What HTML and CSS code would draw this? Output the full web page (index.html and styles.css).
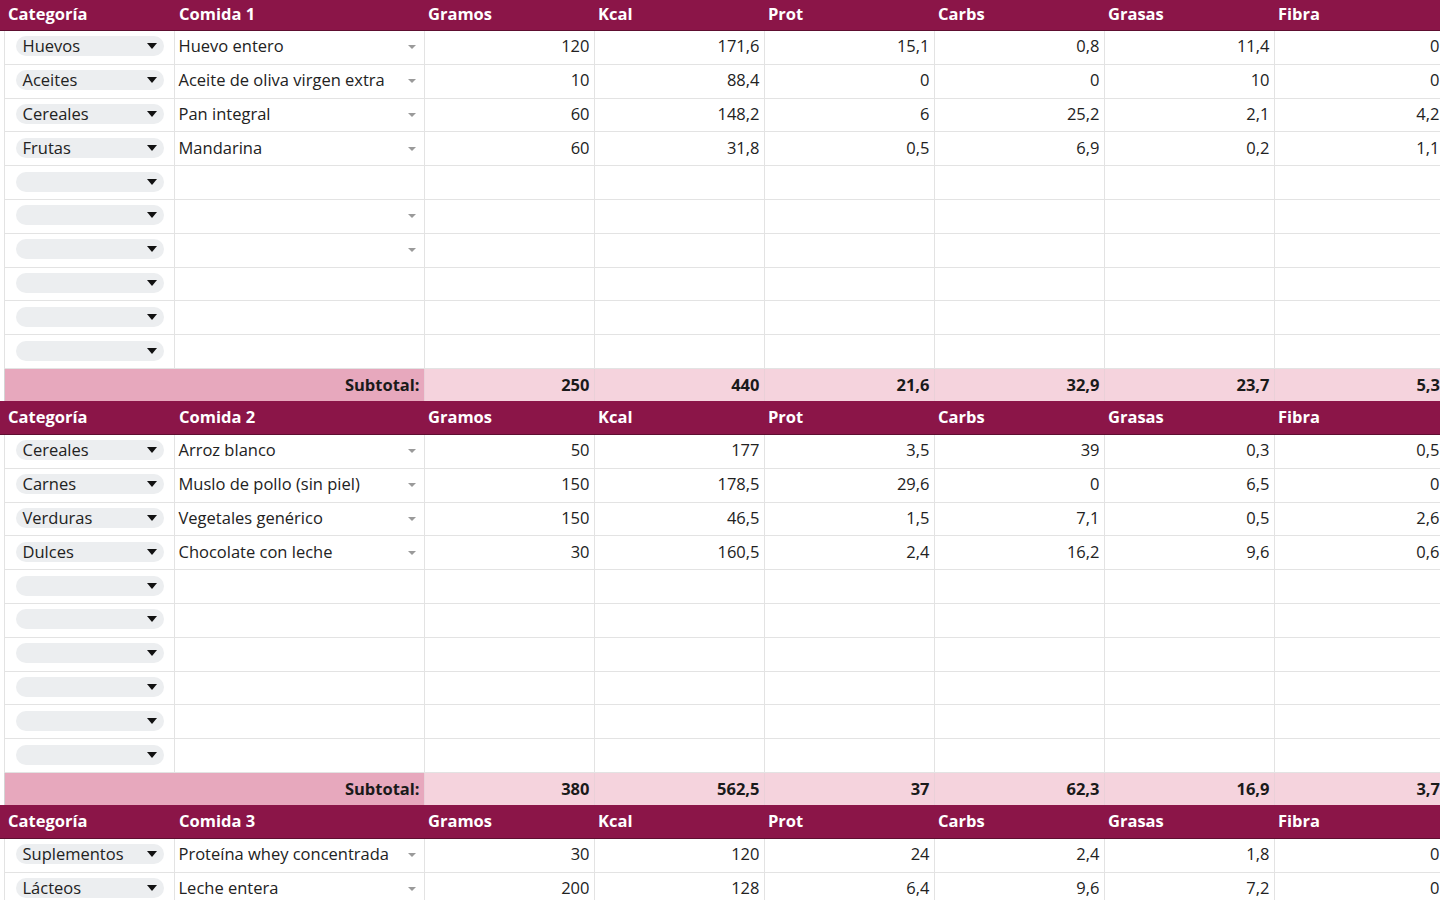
FILE: index.html
```html
<!DOCTYPE html>
<html lang="es">
<head>
<meta charset="utf-8">
<title>Comidas</title>
<link rel="stylesheet" href="styles.css">
</head>
<body>
<div class="sheet">
<table class="grid">
<colgroup>
<col class="c-pad"><col class="c-cat"><col class="c-food"><col class="c-num"><col class="c-num"><col class="c-num"><col class="c-num"><col class="c-num"><col class="c-num">
</colgroup>
<tbody>
<!-- Comida 1 -->
<tr class="head"><td></td><td>Categoría</td><td>Comida 1</td><td>Gramos</td><td>Kcal</td><td>Prot</td><td>Carbs</td><td>Grasas</td><td>Fibra</td></tr>
<tr class="row"><td class="pad"></td><td class="cat"><span class="pill">Huevos<i class="tri"></i></span></td><td class="food">Huevo entero<i class="arr"></i></td><td>120</td><td>171,6</td><td>15,1</td><td>0,8</td><td>11,4</td><td>0</td></tr>
<tr class="row"><td class="pad"></td><td class="cat"><span class="pill">Aceites<i class="tri"></i></span></td><td class="food">Aceite de oliva virgen extra<i class="arr"></i></td><td>10</td><td>88,4</td><td>0</td><td>0</td><td>10</td><td>0</td></tr>
<tr class="row"><td class="pad"></td><td class="cat"><span class="pill">Cereales<i class="tri"></i></span></td><td class="food">Pan integral<i class="arr"></i></td><td>60</td><td>148,2</td><td>6</td><td>25,2</td><td>2,1</td><td>4,2</td></tr>
<tr class="row"><td class="pad"></td><td class="cat"><span class="pill">Frutas<i class="tri"></i></span></td><td class="food">Mandarina<i class="arr"></i></td><td>60</td><td>31,8</td><td>0,5</td><td>6,9</td><td>0,2</td><td>1,1</td></tr>
<tr class="row"><td class="pad"></td><td class="cat"><span class="pill"><i class="tri"></i></span></td><td class="food"></td><td></td><td></td><td></td><td></td><td></td><td></td></tr>
<tr class="row"><td class="pad"></td><td class="cat"><span class="pill"><i class="tri"></i></span></td><td class="food"><i class="arr"></i></td><td></td><td></td><td></td><td></td><td></td><td></td></tr>
<tr class="row"><td class="pad"></td><td class="cat"><span class="pill"><i class="tri"></i></span></td><td class="food"><i class="arr"></i></td><td></td><td></td><td></td><td></td><td></td><td></td></tr>
<tr class="row"><td class="pad"></td><td class="cat"><span class="pill"><i class="tri"></i></span></td><td class="food"></td><td></td><td></td><td></td><td></td><td></td><td></td></tr>
<tr class="row"><td class="pad"></td><td class="cat"><span class="pill"><i class="tri"></i></span></td><td class="food"></td><td></td><td></td><td></td><td></td><td></td><td></td></tr>
<tr class="row"><td class="pad"></td><td class="cat"><span class="pill"><i class="tri"></i></span></td><td class="food"></td><td></td><td></td><td></td><td></td><td></td><td></td></tr>
<tr class="sub"><td class="pad"></td><td class="sublabel" colspan="2">Subtotal:</td><td>250</td><td>440</td><td>21,6</td><td>32,9</td><td>23,7</td><td>5,3</td></tr>
<!-- Comida 2 -->
<tr class="head"><td></td><td>Categoría</td><td>Comida 2</td><td>Gramos</td><td>Kcal</td><td>Prot</td><td>Carbs</td><td>Grasas</td><td>Fibra</td></tr>
<tr class="row"><td class="pad"></td><td class="cat"><span class="pill">Cereales<i class="tri"></i></span></td><td class="food">Arroz blanco<i class="arr"></i></td><td>50</td><td>177</td><td>3,5</td><td>39</td><td>0,3</td><td>0,5</td></tr>
<tr class="row"><td class="pad"></td><td class="cat"><span class="pill">Carnes<i class="tri"></i></span></td><td class="food">Muslo de pollo (sin piel)<i class="arr"></i></td><td>150</td><td>178,5</td><td>29,6</td><td>0</td><td>6,5</td><td>0</td></tr>
<tr class="row"><td class="pad"></td><td class="cat"><span class="pill">Verduras<i class="tri"></i></span></td><td class="food">Vegetales genérico<i class="arr"></i></td><td>150</td><td>46,5</td><td>1,5</td><td>7,1</td><td>0,5</td><td>2,6</td></tr>
<tr class="row"><td class="pad"></td><td class="cat"><span class="pill">Dulces<i class="tri"></i></span></td><td class="food">Chocolate con leche<i class="arr"></i></td><td>30</td><td>160,5</td><td>2,4</td><td>16,2</td><td>9,6</td><td>0,6</td></tr>
<tr class="row"><td class="pad"></td><td class="cat"><span class="pill"><i class="tri"></i></span></td><td class="food"></td><td></td><td></td><td></td><td></td><td></td><td></td></tr>
<tr class="row"><td class="pad"></td><td class="cat"><span class="pill"><i class="tri"></i></span></td><td class="food"></td><td></td><td></td><td></td><td></td><td></td><td></td></tr>
<tr class="row"><td class="pad"></td><td class="cat"><span class="pill"><i class="tri"></i></span></td><td class="food"></td><td></td><td></td><td></td><td></td><td></td><td></td></tr>
<tr class="row"><td class="pad"></td><td class="cat"><span class="pill"><i class="tri"></i></span></td><td class="food"></td><td></td><td></td><td></td><td></td><td></td><td></td></tr>
<tr class="row"><td class="pad"></td><td class="cat"><span class="pill"><i class="tri"></i></span></td><td class="food"></td><td></td><td></td><td></td><td></td><td></td><td></td></tr>
<tr class="row"><td class="pad"></td><td class="cat"><span class="pill"><i class="tri"></i></span></td><td class="food"></td><td></td><td></td><td></td><td></td><td></td><td></td></tr>
<tr class="sub"><td class="pad"></td><td class="sublabel" colspan="2">Subtotal:</td><td>380</td><td>562,5</td><td>37</td><td>62,3</td><td>16,9</td><td>3,7</td></tr>
<!-- Comida 3 -->
<tr class="head"><td></td><td>Categoría</td><td>Comida 3</td><td>Gramos</td><td>Kcal</td><td>Prot</td><td>Carbs</td><td>Grasas</td><td>Fibra</td></tr>
<tr class="row"><td class="pad"></td><td class="cat"><span class="pill">Suplementos<i class="tri"></i></span></td><td class="food">Proteína whey concentrada<i class="arr"></i></td><td>30</td><td>120</td><td>24</td><td>2,4</td><td>1,8</td><td>0</td></tr>
<tr class="row"><td class="pad"></td><td class="cat"><span class="pill">Lácteos<i class="tri"></i></span></td><td class="food">Leche entera<i class="arr"></i></td><td>200</td><td>128</td><td>6,4</td><td>9,6</td><td>7,2</td><td>0</td></tr>
<tr class="row"><td class="pad"></td><td class="cat"><span class="pill"><i class="tri"></i></span></td><td class="food"></td><td></td><td></td><td></td><td></td><td></td><td></td></tr>
</tbody>
</table>
</div>
</body>
</html>
```
FILE: styles.css
```css
html, body {
  margin: 0;
  padding: 0;
  background: #ffffff;
  overflow: hidden;
  height: 900px;
}
.sheet {
  margin-top: -3px;
  font-family: "Open Sans", "Noto Sans", sans-serif;
  font-size: 16.5px;
  color: #222222;
}
.grid {
  border-collapse: collapse;
  table-layout: fixed;
  width: 1444px;
}
.c-pad { width: 4px; }
.c-cat { width: 170px; }
.c-food { width: 250px; }
.c-num { width: 170px; }

.grid td {
  padding: 0 4px;
  white-space: nowrap;
  overflow: hidden;
  vertical-align: middle;
  line-height: 20px;
}
.head td {
  height: 33px;
  background: #8b1548;
  color: #ffffff;
  font-weight: 700;
  text-align: left;
  border-bottom: 1px solid #5e0e30;
  padding-left: 4px;
}
.head td:nth-child(3) { padding-left: 5px; }

.row td {
  height: 30.8px;
  border: 1px solid #e3e3e3;
  text-align: right;
  padding-top: 0;
  padding-bottom: 2px;
}
.row td.pad {
  border: none;
  padding: 0;
}
.row td.cat {
  text-align: left;
  padding: 0 10px 2px 11px;
}
.row td.food {
  text-align: left;
  padding: 0 6px 2px 4px;
  position: relative;
}
.pill {
  display: flex;
  align-items: center;
  height: 20px;
  border-radius: 10px;
  background: #eceef0;
  padding: 0 7px 0 7px;
  line-height: 20px;
}
.tri {
  margin-left: auto;
  width: 0;
  height: 0;
  border-left: 5px solid transparent;
  border-right: 5px solid transparent;
  border-top: 6px solid #111111;
}
.arr {
  position: absolute;
  right: 8px;
  top: 50%;
  margin-top: -2px;
  width: 0;
  height: 0;
  border-left: 4px solid transparent;
  border-right: 4px solid transparent;
  border-top: 4px solid #9a9a9a;
}
.sub td {
  height: 32px;
  background: #f5d3dd;
  font-weight: 700;
  text-align: right;
  color: #1a1a1a;
  border-top: 1px solid #d9b3bf;
  border-left: 1px solid #ead0d8;
}
.sub td.pad {
  background: #ffffff;
  border: none;
  padding: 0;
}
.sub td.sublabel {
  background: #e7a8bd;
  border-left: 1px solid #d4d4d4;
}
```
